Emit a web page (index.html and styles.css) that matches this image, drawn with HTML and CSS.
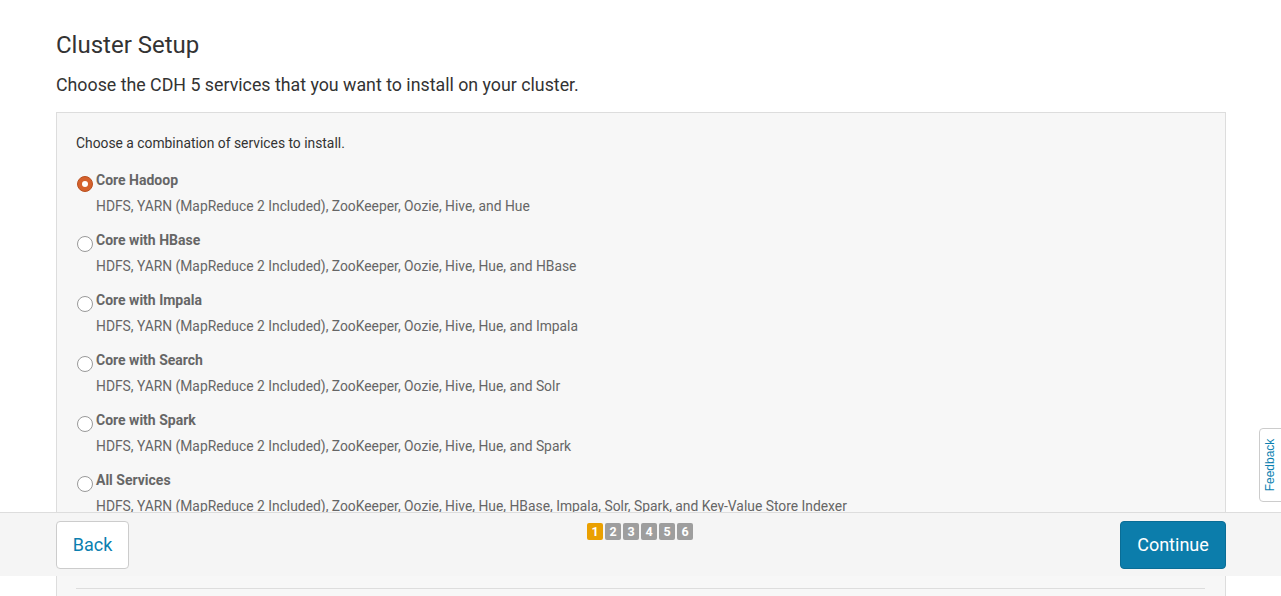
FILE: index.html
```html
<!DOCTYPE html>
<html>
<head>
<meta charset="utf-8">
<link rel="stylesheet" href="styles.css">
</head>
<body>
<div class="page">
  <h1 class="title">Cluster Setup</h1>
  <p class="subtitle">Choose the CDH 5 services that you want to install on your cluster.</p>
  <div class="panel">
    <p class="intro">Choose a combination of services to install.</p>
    <div class="option">
      <div class="opt-head"><span class="radio checked"></span><span class="opt-label">Core Hadoop</span></div>
      <div class="opt-desc">HDFS, YARN (MapReduce 2 Included), ZooKeeper, Oozie, Hive, and Hue</div>
    </div>
    <div class="option">
      <div class="opt-head"><span class="radio"></span><span class="opt-label">Core with HBase</span></div>
      <div class="opt-desc">HDFS, YARN (MapReduce 2 Included), ZooKeeper, Oozie, Hive, Hue, and HBase</div>
    </div>
    <div class="option">
      <div class="opt-head"><span class="radio"></span><span class="opt-label">Core with Impala</span></div>
      <div class="opt-desc">HDFS, YARN (MapReduce 2 Included), ZooKeeper, Oozie, Hive, Hue, and Impala</div>
    </div>
    <div class="option">
      <div class="opt-head"><span class="radio"></span><span class="opt-label">Core with Search</span></div>
      <div class="opt-desc">HDFS, YARN (MapReduce 2 Included), ZooKeeper, Oozie, Hive, Hue, and Solr</div>
    </div>
    <div class="option">
      <div class="opt-head"><span class="radio"></span><span class="opt-label">Core with Spark</span></div>
      <div class="opt-desc">HDFS, YARN (MapReduce 2 Included), ZooKeeper, Oozie, Hive, Hue, and Spark</div>
    </div>
    <div class="option">
      <div class="opt-head"><span class="radio"></span><span class="opt-label">All Services</span></div>
      <div class="opt-desc">HDFS, YARN (MapReduce 2 Included), ZooKeeper, Oozie, Hive, Hue, HBase, Impala, Solr, Spark, and Key-Value Store Indexer</div>
    </div>
    <hr class="divider">
  </div>
</div>

<div class="footer">
  <div class="footer-left"><button class="btn btn-back">Back</button></div>
  <div class="steps">
    <span class="step active">1</span><span class="step">2</span><span class="step">3</span><span class="step">4</span><span class="step">5</span><span class="step">6</span>
  </div>
  <div class="footer-right"><button class="btn btn-continue">Continue</button></div>
</div>

<div class="feedback"><span>Feedback</span></div>
</body>
</html>
```

FILE: styles.css
```css
html, body {
  margin: 0;
  padding: 0;
  background: #fff;
  font-family: Roboto, "Liberation Sans", sans-serif;
  color: #333;
}

.page {
  width: 1170px;
  margin-left: 56px;
  padding-top: 31px;
}

.title {
  margin: 0;
  font-size: 24px;
  font-weight: 400;
  line-height: 28px;
  color: #333;
}

.subtitle {
  margin: 15px 0 0;
  font-size: 17.8px;
  line-height: 22px;
  color: #333;
}

.panel {
  margin-top: 16px;
  border: 1px solid #ddd;
  background: #f7f7f7;
  padding: 20px 20px 120px 19px;
}

.intro {
  margin: 0;
  font-size: 13.85px;
  line-height: 20px;
  color: #333;
}

.option {
  margin-bottom: 14px;
}

.intro + .option {
  margin-top: 17px;
}

.opt-head {
  display: flex;
  align-items: flex-start;
  height: 20px;
}

.radio {
  width: 14px;
  height: 14px;
  margin: 6px 3px 0 1px;
  border: 1px solid #999;
  border-radius: 50%;
  background: #fff;
  flex: none;
  box-sizing: content-box;
  position: relative;
}

.radio.checked {
  background: #d5612c;
  border-color: #b9501f;
}

.radio.checked::after {
  content: "";
  position: absolute;
  left: 4px;
  top: 4px;
  width: 6px;
  height: 6px;
  border-radius: 50%;
  background: #fff;
}

.opt-label {
  font-size: 14px;
  line-height: 20px;
  font-weight: 700;
  color: #666;
}

.opt-desc {
  margin-top: 6px;
  margin-left: 20px;
  font-size: 13.85px;
  line-height: 20px;
  color: #666;
}

.divider {
  border: 0;
  border-top: 1px solid #ddd;
  margin: 72px 0 0 0;
}

.footer {
  position: fixed;
  left: 0;
  right: 0;
  top: 512px;
  height: 64px;
  box-sizing: border-box;
  border-top: 1px solid #ddd;
  background: #f5f5f5;
  display: grid;
  grid-template-columns: 1fr auto 1fr;
  align-items: start;
  padding: 8px 55px 0 56px;
}

.footer-right {
  display: flex;
  justify-content: flex-end;
}

.btn {
  font-family: Roboto, "Liberation Sans", sans-serif;
  font-size: 18px;
  height: 48px;
  border-radius: 4px;
  cursor: pointer;
  padding-bottom: 2px;
}

.btn-back {
  width: 73px;
  background: #fff;
  border: 1px solid #ccc;
  color: #0b7fb0;
}

.btn-continue {
  width: 106px;
  background: #0c7dab;
  border: 1px solid #0a6d96;
  color: #fff;
}

.steps {
  display: flex;
  gap: 2px;
  margin-top: 2px;
  transform: translateX(-1px);
}

.step {
  width: 16px;
  height: 17px;
  border-radius: 2px;
  background: #9e9e9e;
  color: #fff;
  font-size: 12.5px;
  font-weight: 700;
  line-height: 17px;
  text-align: center;
}

.step.active {
  background: #eaa000;
}

.feedback {
  position: fixed;
  right: -1px;
  top: 428px;
  width: 21px;
  height: 72px;
  background: #fff;
  border: 1px solid #ccc;
  border-radius: 4px 0 0 4px;
  display: flex;
  align-items: center;
  justify-content: center;
}

.feedback span {
  transform: rotate(-90deg);
  font-family: "Liberation Sans", Arial, sans-serif;
  font-size: 12px;
  color: #0b7fb0;
  white-space: nowrap;
}
```
